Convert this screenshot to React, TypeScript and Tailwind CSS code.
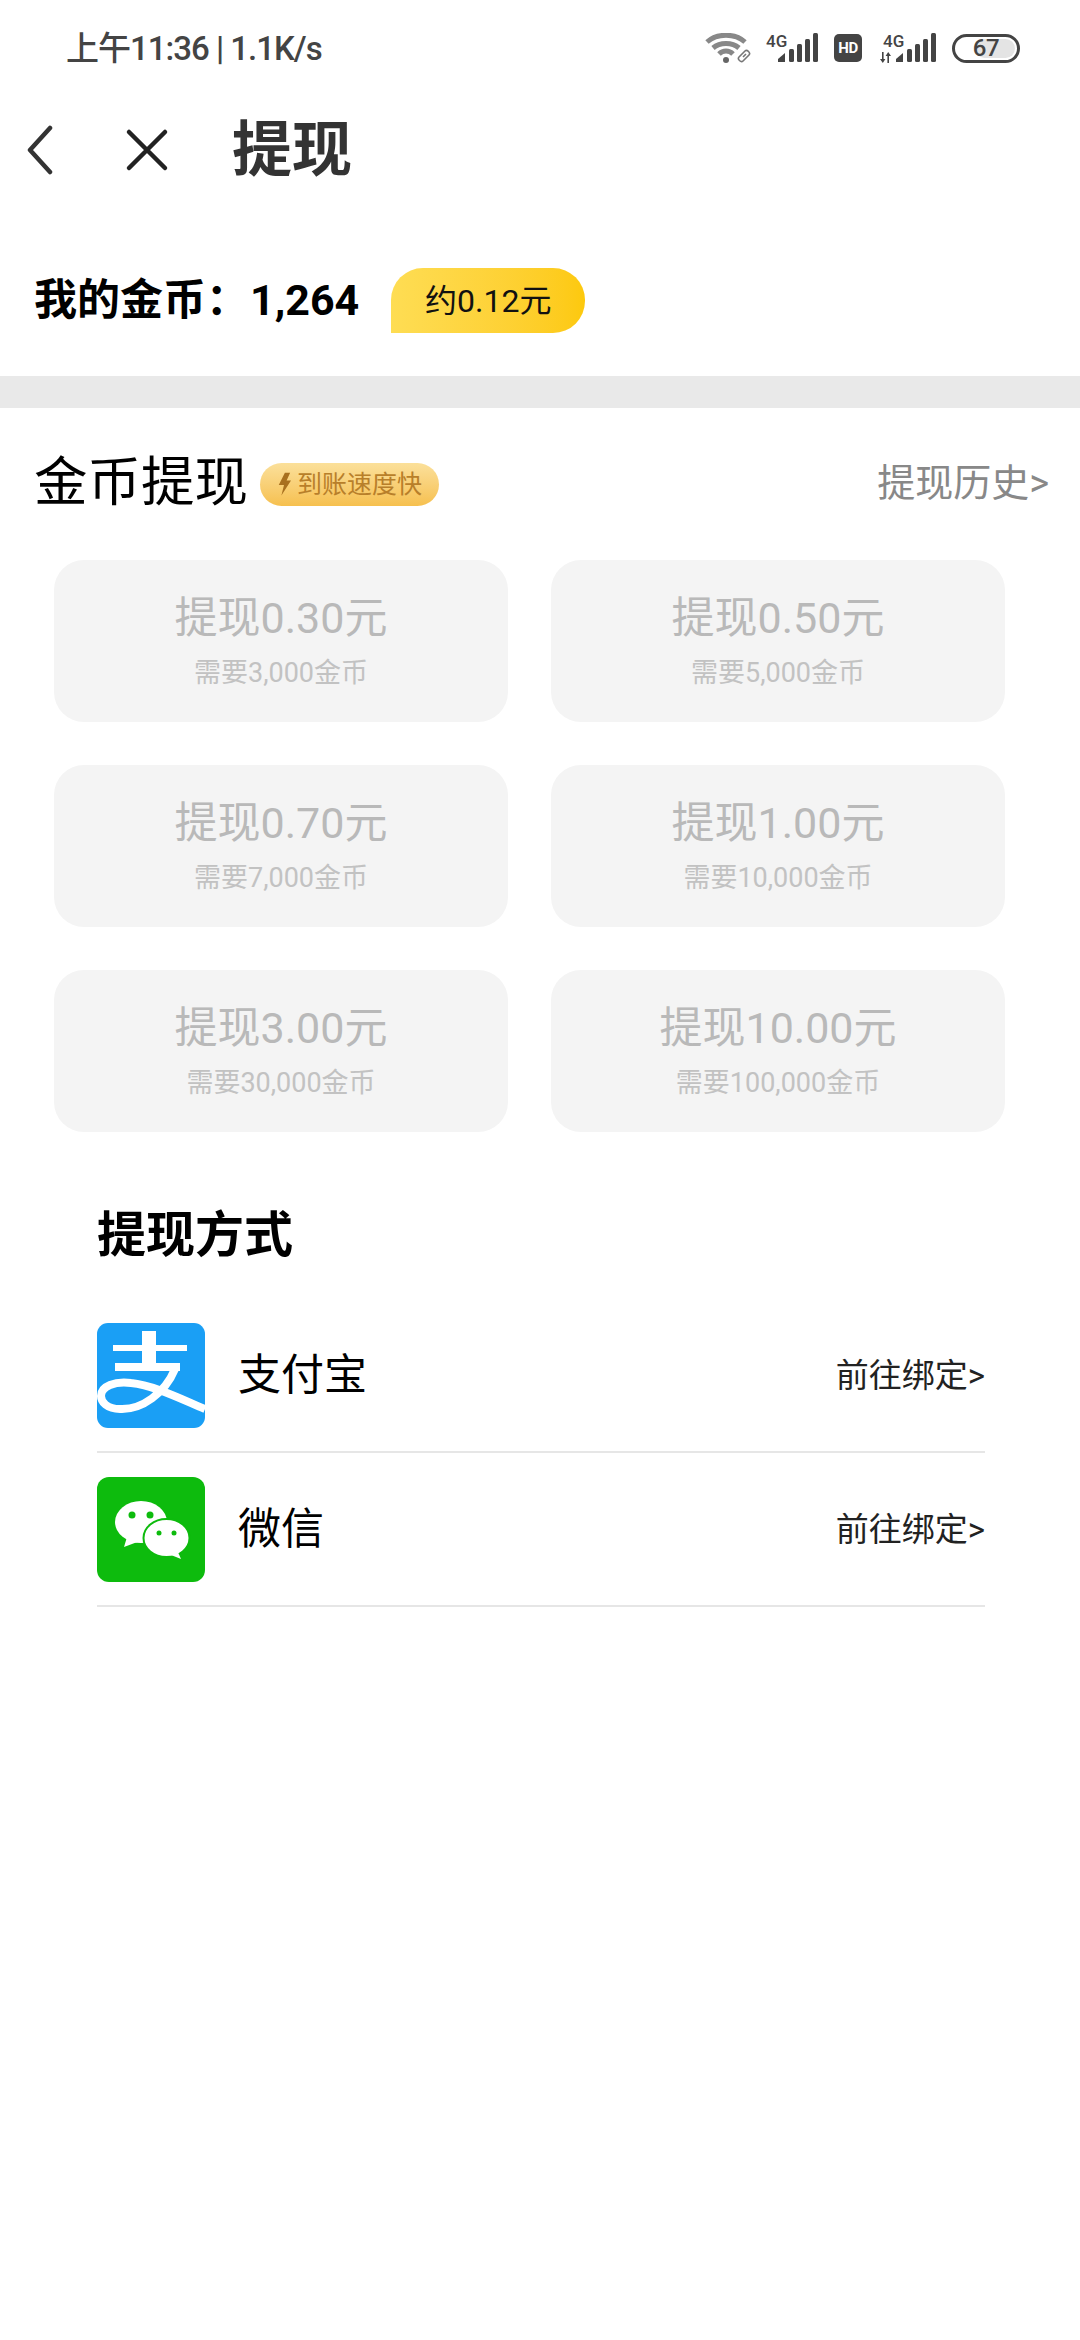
import React from "react";

const FONT = "font-['Roboto','Noto_Sans_CJK_SC',sans-serif]";

const CARDS = [
  { title: "提现0.30元", need: "需要3,000金币" },
  { title: "提现0.50元", need: "需要5,000金币" },
  { title: "提现0.70元", need: "需要7,000金币" },
  { title: "提现1.00元", need: "需要10,000金币" },
  { title: "提现3.00元", need: "需要30,000金币" },
  { title: "提现10.00元", need: "需要100,000金币" },
];

function Bars() {
  return (
    <svg width="40" height="29" viewBox="0 0 40 29" fill="#444">
      <path d="M0 29v-3l7-6v9z" />
      <rect x="11" y="16" width="5" height="13" rx="1.5" />
      <rect x="19" y="11" width="5" height="18" rx="1.5" />
      <rect x="27" y="6" width="5" height="23" rx="1.5" />
      <rect x="35" y="0" width="5" height="29" rx="1.5" />
    </svg>
  );
}

function StatusBar() {
  return (
    <div className="flex h-[96px] items-center justify-between pl-[66px] pr-[60px]">
      <div className="text-[33px] font-medium leading-none tracking-[-1px] text-[#444]">上午11:36 | 1.1K/s</div>
      <div className="flex h-[30px] items-center">
        {/* wifi with link */}
        <svg width="47" height="30" viewBox="0 0 47 30" fill="none" className="mr-[14px]">
          <path d="M2 9C12 0 30 0 40 9" stroke="#888" strokeWidth="5" />
          <path d="M8 15C15 9 27 9 34 15" stroke="#888" strokeWidth="5" />
          <path d="M14 21C18 17 24 17 28 21" stroke="#888" strokeWidth="5" />
          <circle cx="21" cy="27" r="3" fill="#666" />
          <path d="M34 24l6-6c2-2 6 2 4 4l-6 6c-2 2-6-2-4-4zM38 24l3-3" stroke="#777" strokeWidth="1.6" />
        </svg>
        <div className="relative mr-[16px] flex h-[30px] w-[52px] justify-end">
          <span className="absolute left-0 top-0 text-[17px] font-medium leading-none text-[#444]">4G</span>
          <Bars />
        </div>
        <div className="mr-[18px] flex h-[28px] w-[28px] items-center justify-center rounded-[5px] bg-[#444] text-[15px] font-bold leading-none tracking-[-0.5px] text-white">HD</div>
        <div className="relative mr-[16px] flex h-[30px] w-[56px] justify-end">
          <span className="absolute left-[3px] top-0 text-[17px] font-medium leading-none text-[#444]">4G</span>
          <svg width="11" height="11" viewBox="0 0 11 11" fill="#444" className="absolute bottom-0 left-0">
            <path d="M2 0h1.6v7H5.4L2.8 11 0 7h2zM7.4 11H9V4h2L8.2 0 5.6 4h1.8z" />
          </svg>
          <Bars />
        </div>
        <div className="relative flex h-[29px] w-[68px] items-center justify-center overflow-hidden rounded-full border-[3px] border-[#444] text-[24px] font-medium leading-none tracking-[-0.5px] text-[#444]">
          <div className="absolute inset-y-[2px] right-[2px] w-[40px] rounded-[10px] bg-[#e4e4e4]" />
          <span className="relative">67</span>
        </div>
      </div>
    </div>
  );
}

function AlipayIcon() {
  return (
    <svg width="108" height="105" viewBox="0 0 108 105" className="shrink-0">
      <rect width="108" height="105" rx="11" fill="#1a9ff5" />
      <path d="M16 22h74v6H16zM45 8h14v36H45zM18 40h65v8H18z" fill="#fff" />
      <path
        d="M78 46C68 70 45 87 23 86C10 86 4 79 4 73C4 63 18 58 34 60C56 62 84 76 108 86"
        fill="none"
        stroke="#fff"
        strokeWidth="8"
      />
    </svg>
  );
}

function WechatIcon() {
  return (
    <svg width="108" height="105" viewBox="0 0 108 105" className="shrink-0">
      <rect width="108" height="105" rx="12" fill="#0dbb0d" />
      <ellipse cx="44" cy="45" rx="26" ry="21" fill="#fff" />
      <path d="M30 60l-3 10 16-6z" fill="#fff" />
      <ellipse cx="69.500" cy="61" rx="23" ry="19" fill="#fff" stroke="#0dbb0d" strokeWidth="2" />
      <path d="M74 78l10 4-4-9z" fill="#fff" />
      <circle cx="35" cy="38" r="3.500" fill="#0dbb0d" />
      <circle cx="53" cy="38" r="3.500" fill="#0dbb0d" />
      <circle cx="62" cy="56" r="2.500" fill="#0dbb0d" />
      <circle cx="77" cy="56" r="2.500" fill="#0dbb0d" />
    </svg>
  );
}

function PayRow({ icon, name }: { icon: React.ReactNode; name: string }) {
  return (
    <div className="flex h-[154px] items-center border-b-2 border-[#e6e6e6]">
      {icon}
      <span className="ml-[33px] flex-1 text-[43px] leading-none text-black">{name}</span>
      <span className="text-[33px] leading-none text-[#222]">前往绑定&gt;</span>
    </div>
  );
}

export default function App() {
  return (
    <div className={`${FONT} h-[2340px] w-[1080px] overflow-hidden bg-white`}>
      <StatusBar />

      {/* Title bar */}
      <div className="flex h-[108px] items-center">
        <svg width="30" height="50" viewBox="0 0 30 50" fill="none" className="ml-[25px]">
          <path d="M25 3L5 25l20 22" stroke="#333" strokeWidth="4.500" strokeLinecap="round" strokeLinejoin="round" />
        </svg>
        <svg width="44" height="44" viewBox="0 0 44 44" fill="none" className="ml-[70px]">
          <path d="M4 4l36 36M40 4L4 40" stroke="#222" strokeWidth="4.500" strokeLinecap="round" />
        </svg>
        <div className="ml-[63px] mt-[2px] text-[60px] font-bold leading-none text-[#333]">提现</div>
      </div>

      {/* Coins */}
      <div className="mt-[64px] flex h-[65px] items-center pl-[34px]">
        <span className="text-[43px] font-bold leading-none text-black">我的金币：</span>
        <span className="ml-[1px] text-[43px] font-bold leading-none text-black">1,264</span>
        <div className="ml-[32px] flex h-[65px] w-[194px] items-center justify-center rounded-[32px] rounded-bl-none bg-gradient-to-r from-[#fedd53] to-[#fdc90c] text-[32px] leading-none text-[#111]">
          约0.12元
        </div>
      </div>

      <div className="mt-[43px] h-[32px] bg-[#e9e9e9]" />

      {/* Withdraw header */}
      <div className="mt-[46px] flex h-[60px] items-center pl-[34px] pr-[31px]">
        <span className="mb-[2px] text-[53.500px] leading-none text-black">金币提现</span>
        <div className="ml-[12px] flex h-[43px] w-[179px] items-center justify-center gap-[6px] rounded-full bg-gradient-to-b from-[#fbe09a] to-[#f6c04e] text-[25px] leading-none text-[#b87f2a]">
          <svg width="14" height="26" viewBox="0 0 16 26" fill="#a8701f">
            <path d="M9 0h6l-4 9h5L5 26l3-12H2z" />
          </svg>
          到账速度快
        </div>
        <span className="ml-auto mb-[2px] text-[38px] leading-none text-[#888]">提现历史&gt;</span>
      </div>

      {/* Amount cards */}
      <div className="mt-[46px] box-content grid w-[951px] grid-cols-2 gap-x-[43px] gap-y-[43px] pl-[54px]">
        {CARDS.map((c) => (
          <div key={c.title} className="flex h-[162px] flex-col items-center rounded-[30px] bg-[#f4f4f4] pt-[37px]">
            <div className="text-[43px] leading-none text-[#b9b9b9]">{c.title}</div>
            <div className="mt-[20px] text-[27px] leading-none text-[#c2c2c2]">{c.need}</div>
          </div>
        ))}
      </div>

      {/* Pay methods */}
      <div className="ml-[97px] mt-[79px] w-[888px]">
        <div className="text-[49px] font-bold leading-none text-black">提现方式</div>
        <div className="mt-[39px]">
          <PayRow icon={<AlipayIcon />} name="支付宝" />
          <PayRow icon={<WechatIcon />} name="微信" />
        </div>
      </div>
    </div>
  );
}
